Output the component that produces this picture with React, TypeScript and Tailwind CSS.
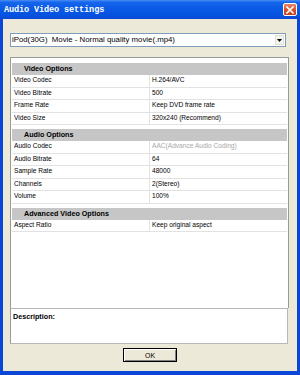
import React from "react";

type Row = { label: string; value: string; disabled?: boolean };
type Section = { title: string; rows: Row[] };

const sections: Section[] = [
  {
    title: "Video Options",
    rows: [
      { label: "Video Codec", value: "H.264/AVC" },
      { label: "Video Bitrate", value: "500" },
      { label: "Frame Rate", value: "Keep DVD frame rate" },
      { label: "Video Size", value: "320x240 (Recommend)" },
    ],
  },
  {
    title: "Audio Options",
    rows: [
      { label: "Audio Codec", value: "AAC(Advance Audio Coding)", disabled: true },
      { label: "Audio Bitrate", value: "64" },
      { label: "Sample Rate", value: "48000" },
      { label: "Channels", value: "2(Stereo)" },
      { label: "Volume", value: "100%" },
    ],
  },
  {
    title: "Advanced Video Options",
    rows: [{ label: "Aspect Ratio", value: "Keep original aspect" }],
  },
];

export default function App() {
  return (
    <div
      className="w-[300px] h-[375px] flex flex-col bg-[#0b46d6] overflow-hidden leading-none"
      style={{ fontFamily: '"Liberation Sans", Arial, sans-serif' }}
    >
      {/* Title bar */}
      <div className="h-[19px] shrink-0 flex items-center justify-between pl-[4px] pr-[3px] bg-[linear-gradient(180deg,#4a8cf5_0%,#1666ec_12%,#0a5ae6_45%,#0553e0_80%,#0a47d2_100%)]">
        <span
          className="text-white font-bold text-[8.6px] leading-none tracking-[-0.15px] mt-[1px]"
          style={{ fontFamily: '"Liberation Mono", "Courier New", monospace' }}
        >
          Audio Video settings
        </span>
        <div className="w-[14px] h-[13px] rounded-[2px] border border-white bg-[linear-gradient(180deg,#e9876a_0%,#d9542c_50%,#c4411b_100%)] flex items-center justify-center">
          <svg width="8" height="8" viewBox="0 0 8 8">
            <path d="M1 1 L7 7 M7 1 L1 7" stroke="white" strokeWidth="1.6" strokeLinecap="square" />
          </svg>
        </div>
      </div>

      {/* Body */}
      <div className="flex-1 mx-[3px] mb-[4px] bg-[#ece9d8] flex flex-col pl-[7px] pt-[14px]">
        {/* Combo box */}
        <div className="w-[276px] h-[14px] border border-[#7f9db9] bg-white flex items-center justify-between pl-[1px] pr-[1px]">
          <span className="text-[7.8px] leading-none text-black whitespace-nowrap">
            iPod(30G)&nbsp; Movie - Normal quality movie(.mp4)
          </span>
          <div className="w-[9px] h-[10px] bg-[#f4f3ee] border border-[#e0dfd8] flex items-center justify-center">
            <svg width="5" height="3" viewBox="0 0 5 3">
              <path d="M0 0 L5 0 L2.5 3 Z" fill="black" />
            </svg>
          </div>
        </div>

        {/* Property grid */}
        <div className="mt-[10px] w-[279px] h-[287px] flex flex-col">
          <div className="flex-1 bg-white border-t border-l border-r border-[#9a9a9a] pt-[5px] pl-[1px] pr-[1px]">
            {sections.map((s) => (
              <div key={s.title} className="mb-[4px]">
                <div className="h-[12px] bg-[#c6c6c6] flex items-center pl-[12px]">
                  <span className="text-[7.2px] font-bold leading-none text-black">{s.title}</span>
                </div>
                {s.rows.map((r) => (
                  <div key={r.label} className="h-[12.5px] flex border-b border-[#e2e2e2]">
                    <div className="w-[138px] pl-[2px] border-r border-[#e2e2e2] flex items-center">
                      <span className="text-[6.6px] leading-none text-black whitespace-nowrap">{r.label}</span>
                    </div>
                    <div className="flex-1 pl-[2px] flex items-center">
                      <span
                        className={
                          "text-[6.6px] leading-none whitespace-nowrap " +
                          (r.disabled ? "text-[#a8a8a8]" : "text-black")
                        }
                      >
                        {r.value}
                      </span>
                    </div>
                  </div>
                ))}
              </div>
            ))}
          </div>
          <div className="h-[36px] w-[278px] bg-white border border-[#b8b8b8] border-l-[#9a9a9a] pl-[2px] pt-[4px] flex items-start">
            <span className="text-[7.2px] font-bold leading-none text-black">Description:</span>
          </div>
        </div>

        {/* OK button */}
        <div className="mt-[4px] w-[276px] flex">
          <div className="ml-[113px] w-[54px] h-[14px] border border-black bg-[#ece9d8] flex items-center justify-center shadow-[inset_1px_1px_0_#ffffff,inset_-1px_-1px_0_#808080]">
            <span className="text-[7px] leading-none text-black">OK</span>
          </div>
        </div>
      </div>
    </div>
  );
}
